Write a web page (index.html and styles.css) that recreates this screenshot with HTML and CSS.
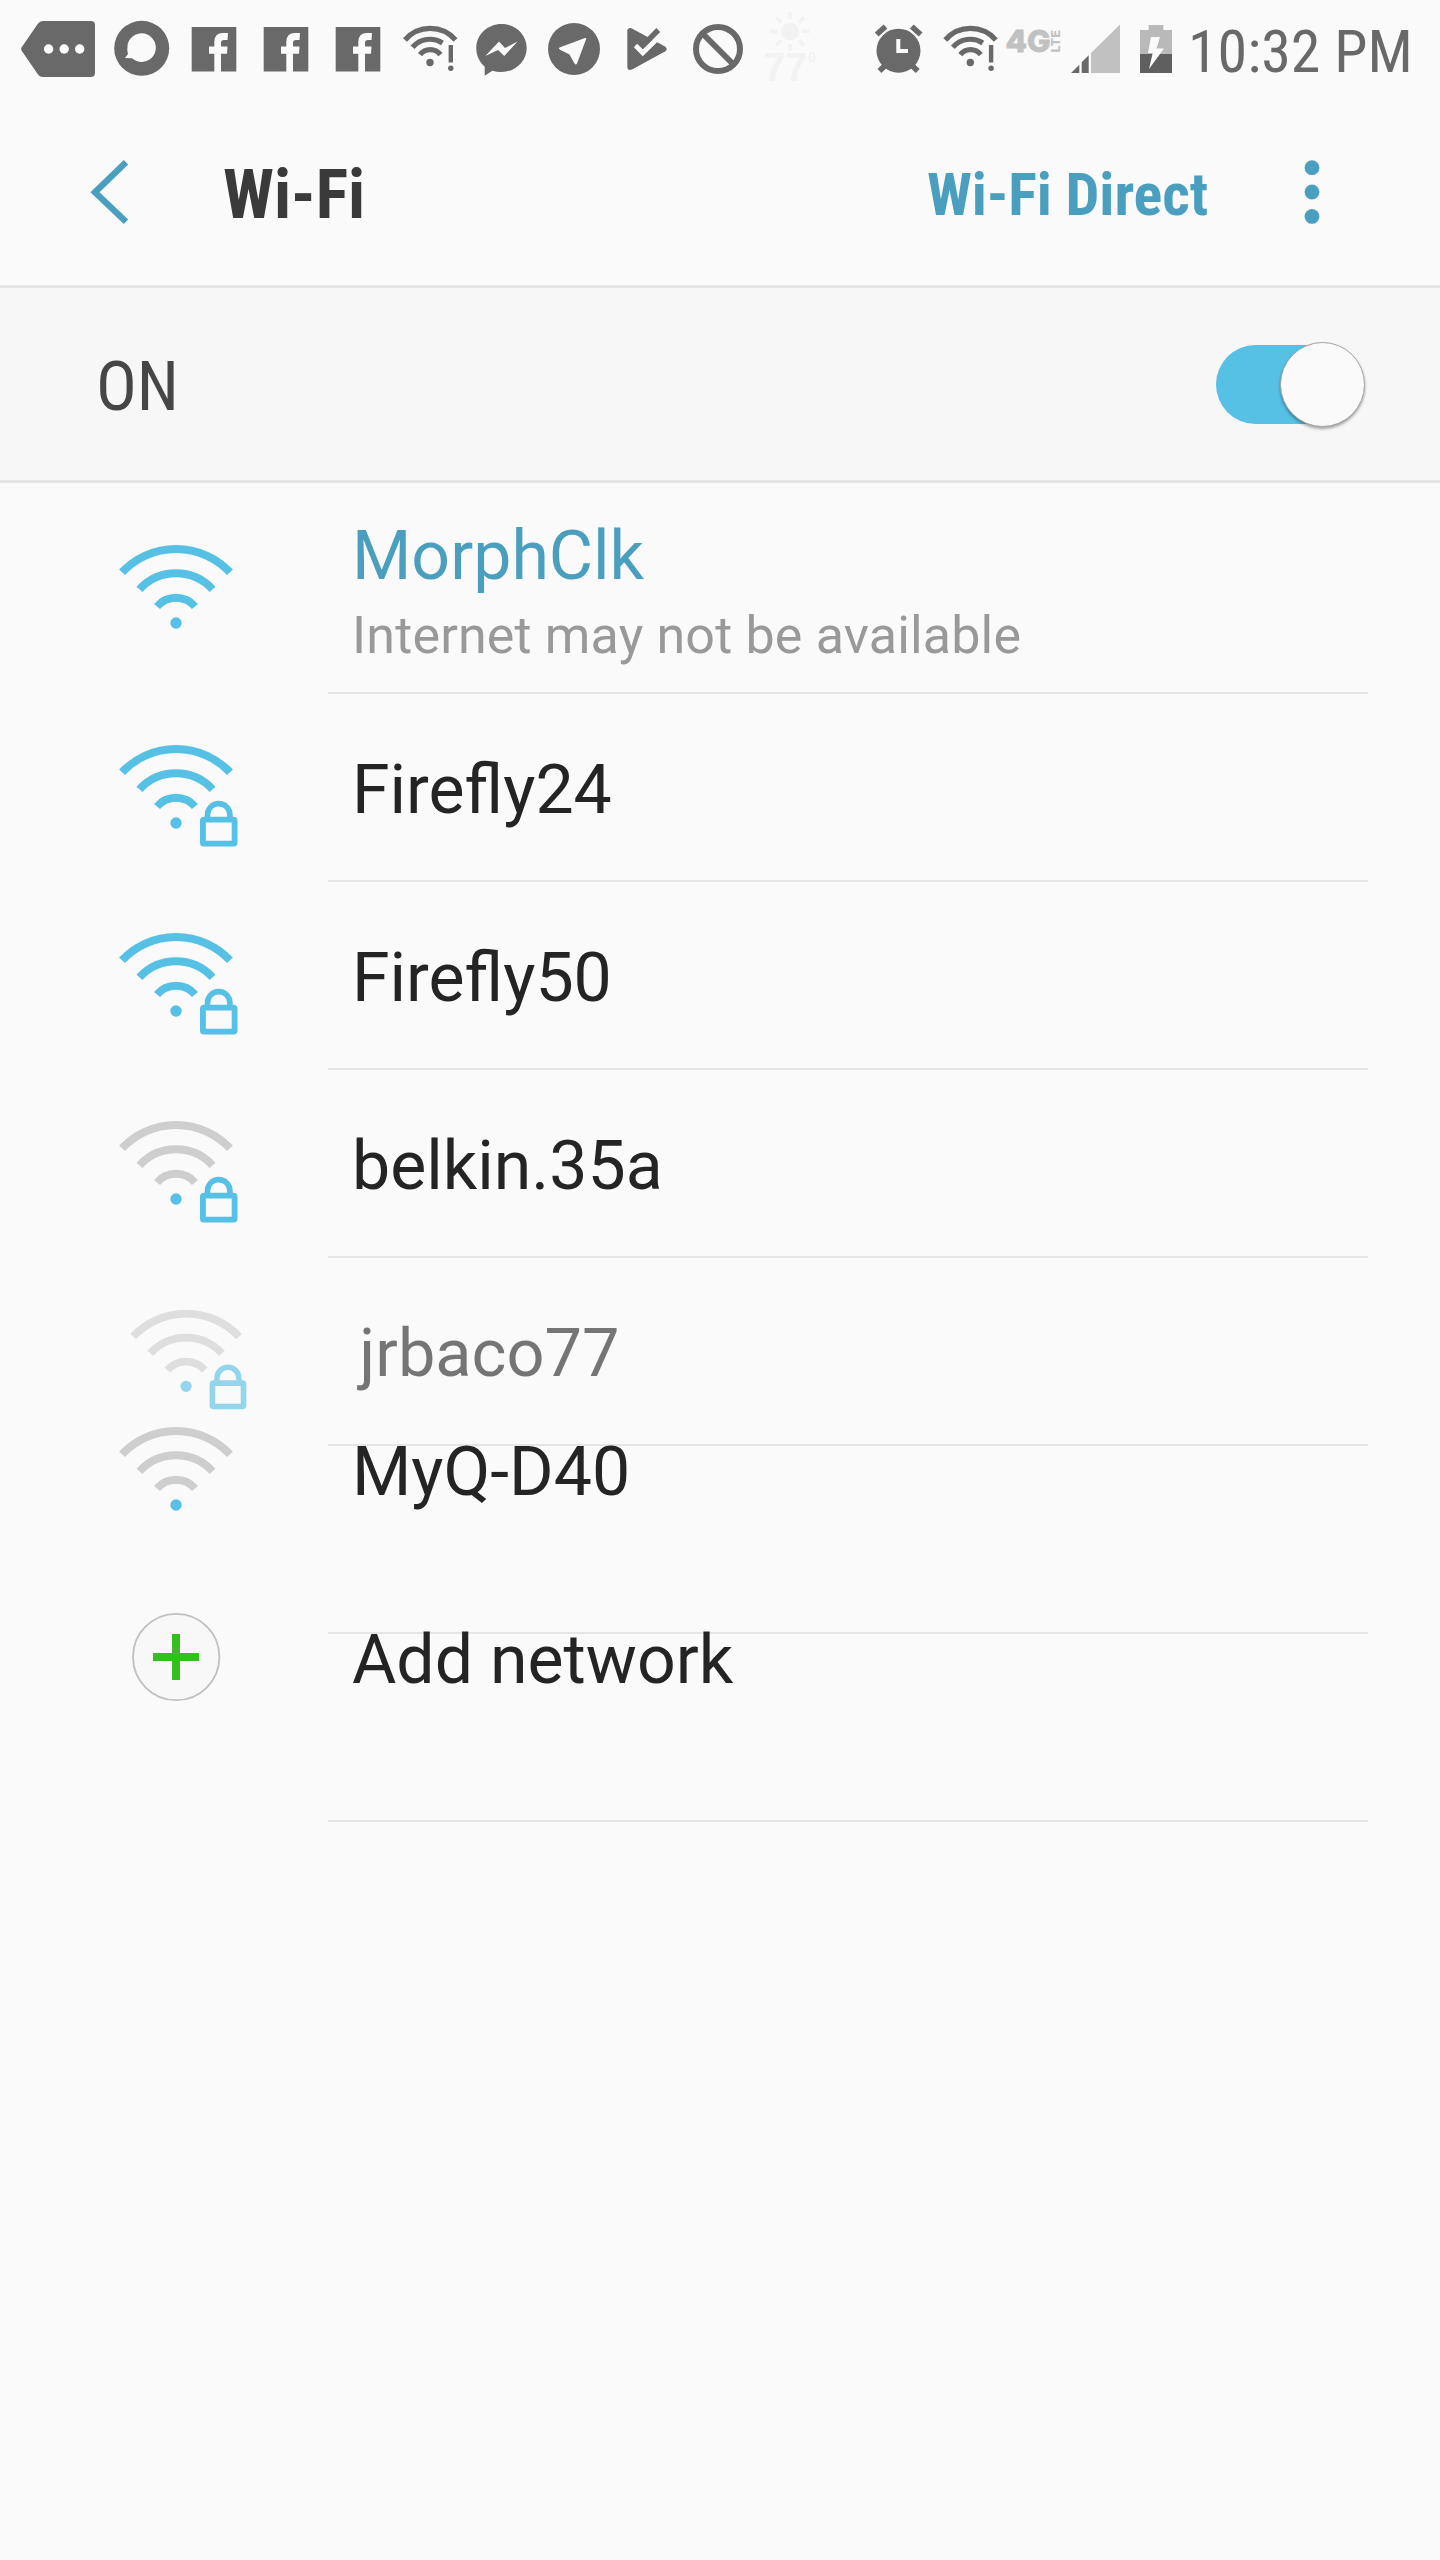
FILE: index.html
```html
<!DOCTYPE html>
<html lang="en">
<head>
<meta charset="utf-8">
<title>Wi-Fi</title>
<link rel="stylesheet" href="styles.css">
</head>
<body>
<svg class="defs" width="0" height="0">
  <symbol id="fb" viewBox="178 0 72 100">
    <path fill="#696969" d="M191.700 27H236.300V71.500H191.700z"/>
    <path fill="#fafafa" d="M214.300 72V53.700H209V46.500H214.300V42Q214.300 33 223 33H228L227.500 40H224Q221 40 221 43V46.500H227.500L227 53.700H221V72z"/>
  </symbol>
  <symbol id="swifi" viewBox="394 0 72 100">
    <g fill="none" stroke="#696969" stroke-width="5.200">
      <path d="M405 40A33.300 33.300 0 0 1 455.500 40"/>
      <path d="M412.500 47.300A23 23 0 0 1 442.500 43"/>
      <path d="M420 54.700A13 13 0 0 1 440.500 54.700"/>
      <path stroke-width="4.400" d="M450.800 45V62.500"/>
    </g>
    <circle cx="430" cy="62.500" r="3.700" fill="#696969"/>
    <circle cx="450.800" cy="68.200" r="2.700" fill="#696969"/>
  </symbol>
  <symbol id="wifi" viewBox="-60 -82 124 110">
    <g class="arcs" fill="none" stroke-width="8">
      <path d="M-54 -50.700A74 74 0 0 1 54 -50.700"/>
      <path d="M-36.500 -33.600A49.500 49.500 0 0 1 36.500 -33.600"/>
      <path d="M-19 -16.500A25 25 0 0 1 19 -16.500"/>
    </g>
    <circle r="5.700" fill="#57c0e5"/>
  </symbol>
  <symbol id="lock" viewBox="-60 -82 124 110">
    <g fill="none" stroke="#57c0e5">
      <rect x="26.900" y="-3.300" width="31.700" height="23.900" rx="1" stroke-width="5.800"/>
      <path stroke-width="5.600" d="M31.500 -4V-8.200a11.200 11.200 0 0 1 22.400 0V-4"/>
    </g>
  </symbol>
</svg>

<header class="status">
  <div class="notifications">
    <svg width="108" height="96" viewBox="0 0 108 96"><path fill="#696969" d="M21.500 47.500L38 23.500Q39.700 21 43 21H91Q95 21 95 25V73Q95 77 91 77H43Q39.700 77 38 74.500L21.500 50.500Q20.700 49 21.500 47.500z"/><g fill="#fff"><circle cx="48.600" cy="49" r="4.700"/><circle cx="64.200" cy="49" r="4.700"/><circle cx="79.700" cy="49" r="4.700"/></g></svg>
    <svg width="70" height="96" viewBox="108 0 70 96"><circle cx="141.700" cy="48.300" r="27.500" fill="#696969"/><path fill="#fafafa" d="M127.700 44A14.300 14.300 0 1 1 132 58.300L125 58L128 54Q126.800 50 127.700 44z"/></svg>
    <svg width="72" height="100"><use href="#fb"/></svg>
    <svg width="72" height="100"><use href="#fb"/></svg>
    <svg width="72" height="100"><use href="#fb"/></svg>
    <svg width="72" height="100"><use href="#swifi"/></svg>
    <svg width="72" height="96" viewBox="466 0 72 96"><path fill="#696969" d="M501.500 24C515.500 24 526.700 34.700 526.700 48S515.500 72 501.500 72Q496.500 72 492.300 70.700L484.700 75.700V66.700C479.500 62 476.300 56 476.300 48C476.300 34.700 487.500 24 501.500 24z"/><path fill="#fafafa" d="M485.300 56L499 41.500L505 48L517.500 41.500L504.300 56L498 50z"/></svg>
    <svg width="72" height="96" viewBox="538 0 72 96"><circle cx="574" cy="49" r="26" fill="#696969"/><path fill="#fafafa" d="M559.500 47.500L585 38Q586.700 37.500 586.200 39L577 63.500Q576 65.500 574.500 63.500L569.500 54.600L560 49.800Q558 48.500 559.500 47.500z"/></svg>
    <svg width="72" height="96" viewBox="610 0 72 96"><path fill="#696969" d="M627.300 30.500Q627.800 27 631.500 28.200L665 46.500Q668.500 49 665 51.500L632 69.500Q627.800 71 627.300 67z"/><path stroke="#696969" stroke-width="5.400" d="M658.300 30L643 45.500"/><path fill="none" stroke="#fafafa" stroke-width="4.800" d="M635.500 45.500L642.800 52.800L658 38"/></svg>
    <svg width="72" height="96" viewBox="682 0 72 96"><g fill="none" stroke="#696969" stroke-width="6"><circle cx="718" cy="49" r="22"/><path d="M702.500 33.500L733.500 64.500"/></g></svg>
    <svg width="72" height="96" viewBox="754 0 72 96"><g fill="#f2f2f2"><circle cx="790" cy="31.500" r="9"/><path stroke="#f2f2f2" stroke-width="3.600" d="M790 12v7M790 44v7M770.500 31.500h7M802.500 31.500h7M776 17.500l5 5M799 40.500l5 5M776 45.500l5-5M799 22.500l5-5"/><text class="temp" x="763.800" y="81" font-size="40" textLength="43" lengthAdjust="spacingAndGlyphs">77</text><text class="temp" x="808" y="62.300" font-size="15">0</text></g></svg>
  </div>
  <div class="system">
    <svg width="64" height="96" viewBox="870 0 64 96"><circle cx="898.500" cy="50.700" r="22" fill="#696969"/><path fill="none" stroke="#696969" stroke-width="5.600" d="M876.700 34.500L885.500 26.500M911.800 26.500L920.600 34.500M879.500 71L886 64.500M911 64.500L917.700 71"/><path fill="none" stroke="#fafafa" stroke-width="4" d="M898.300 39V51H908"/></svg>
    <svg width="68" height="100" viewBox="0 0 68 100"><use href="#swifi" x="0.300" width="72" height="100"/></svg>
    <svg width="62" height="96" viewBox="1002 0 62 96"><g fill="#c1c1c1"><text class="lte" x="1005.500" y="52" font-size="30" textLength="45" lengthAdjust="spacingAndGlyphs" stroke="#c1c1c1" stroke-width="0.800">4G</text><text class="lte" transform="translate(1060 52.500) rotate(-90)" font-size="12" textLength="22.500" lengthAdjust="spacingAndGlyphs">LTE</text></g></svg>
    <svg width="64" height="96" viewBox="1064 0 64 96"><path fill="#c1c1c1" d="M1091 73V53L1120 24.500V73z"/><path fill="#696969" d="M1071 73L1079.300 64.700V73zM1081.700 73V62.300L1088.700 55.300V73z"/></svg>
    <svg width="60" height="96" viewBox="1128 0 60 96"><path fill="#b9b9b9" d="M1140 30H1148.700V25H1163.300V30H1172V54H1140z"/><path fill="#5f5f5f" d="M1140 54H1172V73H1140z"/><path fill="#fafafa" d="M1151 37H1160L1156.500 48.500H1164L1149 69L1152.700 53H1148z"/></svg>
    <span class="clock cond">10:32 PM</span>
  </div>
</header>

<nav class="bar">
  <svg class="back" width="46" height="72" viewBox="86 156 46 72"><path fill="none" stroke="#4a9fbf" stroke-width="6.400" d="M126 162.200L95 192.200L126 221.800"/></svg>
  <h1 class="title cond">Wi-Fi</h1>
  <span class="direct cond">Wi-Fi Direct</span>
  <svg class="more" width="20" height="72" viewBox="1302 156 20 72"><g fill="#4a9fbf"><circle cx="1312" cy="167.700" r="7.400"/><circle cx="1312" cy="192" r="7.400"/><circle cx="1312" cy="216.400" r="7.400"/></g></svg>
</nav>

<section class="power">
  <span class="state cond">ON</span>
  <span class="toggle"><span class="knob"></span></span>
</section>

<main class="list">
  <div class="row connected">
    <svg class="icon strong" width="124" height="110"><use href="#wifi"/></svg>
    <div class="label"><span class="name">MorphClk</span><span class="note">Internet may not be available</span></div>
  </div>
  <div class="row">
    <svg class="icon strong" width="124" height="110"><use href="#wifi"/><use href="#lock"/></svg>
    <div class="label"><span class="name">Firefly24</span></div>
  </div>
  <div class="row">
    <svg class="icon strong" width="124" height="110"><use href="#wifi"/><use href="#lock"/></svg>
    <div class="label"><span class="name">Firefly50</span></div>
  </div>
  <div class="row">
    <svg class="icon" width="124" height="110"><use href="#wifi"/><use href="#lock"/></svg>
    <div class="label"><span class="name">belkin.35a</span></div>
  </div>
  <div class="row leaving">
    <svg class="icon" width="124" height="110"><use href="#wifi"/><use href="#lock"/></svg>
    <div class="label"><span class="name">jrbaco77</span></div>
  </div>
  <div class="row sliding">
    <svg class="icon" width="124" height="110"><use href="#wifi"/></svg>
    <div class="label"><span class="name">MyQ-D40</span></div>
  </div>
  <div class="row sliding">
    <svg class="icon" width="124" height="110" viewBox="116 1611 124 110"><circle cx="176.200" cy="1657" r="43.200" fill="#f8f8f8" stroke="#c0c0c0" stroke-width="1.800"/><path stroke="#35bf1f" stroke-width="8" d="M153 1657H199M176 1634V1680"/></svg>
    <div class="label"><span class="name">Add network</span></div>
  </div>
</main>
</body>
</html>
```
FILE: styles.css
```css
* { box-sizing: border-box; }

body {
  margin: 0;
  width: 1440px;
  height: 2560px;
  background: #fafafa;
  font-family: Roboto, "Liberation Sans", sans-serif;
  overflow: hidden;
}

svg { display: block; flex: none; }
.defs { position: absolute; }

.cond {
  font-family: "Roboto Condensed", Roboto, sans-serif;
  font-stretch: condensed;
  white-space: nowrap;
}

.status {
  display: flex;
  height: 96px;
  overflow: hidden;
}
.notifications { display: flex; width: 870px; }
.system { display: flex; }
.temp { font-family: "Liberation Sans", sans-serif; font-weight: 700; }
.lte { font-family: Inter, sans-serif; font-weight: 800; }
.clock {
  font-size: 60px;
  line-height: 103px;
  color: #696969;
}

.bar {
  display: flex;
  align-items: center;
  height: 192px;
  padding: 3px 118px 0 86px;
  border-bottom: 3px solid #e6e6e6;
}
.title {
  margin: 0 0 0 91px;
  padding-top: 6px;
  font-size: 68px;
  font-weight: 700;
  line-height: 80px;
  color: #3a3a3a;
}
.direct {
  margin-left: auto;
  padding-top: 5px;
  font-size: 60px;
  font-weight: 700;
  line-height: 76px;
  letter-spacing: -.1px;
  color: #4a9fbf;
}
.more { margin-left: 94px; }

.power {
  display: flex;
  align-items: center;
  justify-content: space-between;
  height: 195px;
  padding: 0 78px 0 96px;
  background: #f7f7f7;
  border-bottom: 3px solid #e4e4e4;
}
.state { padding-top: 5px; font-size: 68px; line-height: 80px; color: #464646; }
.toggle {
  position: relative;
  width: 146px;
  height: 79px;
  border-radius: 40px;
  background: #57c0e5;
}
.knob {
  position: absolute;
  right: -3px;
  top: -3px;
  width: 85px;
  height: 85px;
  border: 1px solid #a5a5a5;
  border-radius: 50%;
  background: #fafafa;
  box-shadow: 0 2px 3px rgba(0, 0, 0, .35);
}

.row {
  display: flex;
  align-items: flex-start;
  height: 188px;
  padding-left: 116px;
  background: linear-gradient(#e5e5e5, #e5e5e5) 328px 100% / 1040px 2px no-repeat;
}
.icon { margin-top: 47px; color: #cecece; }
.arcs { stroke: currentColor; }
.strong { color: #57c0e5; }
.label { display: flex; flex-direction: column; margin-left: 112px; padding-top: 56px; }
.name { font-size: 68px; line-height: 80px; color: #242424; white-space: nowrap; }
.note { font-size: 52px; line-height: 60px; letter-spacing: .17px; color: #999; white-space: nowrap; }

.connected { height: 211px; }
.connected .icon { margin-top: 58px; }
.connected .label { padding-top: 33px; }
.connected .name { color: #4a9fbf; }
.connected .note { margin-top: 10px; }

.leaving > * { opacity: .62; }
.leaving .icon { transform: scale(.98); transform-origin: 564px 47px; }
.leaving .label { transform: scale(.98); transform-origin: 368px 80px; }
.sliding > * { transform: translateY(-70px); }
```
